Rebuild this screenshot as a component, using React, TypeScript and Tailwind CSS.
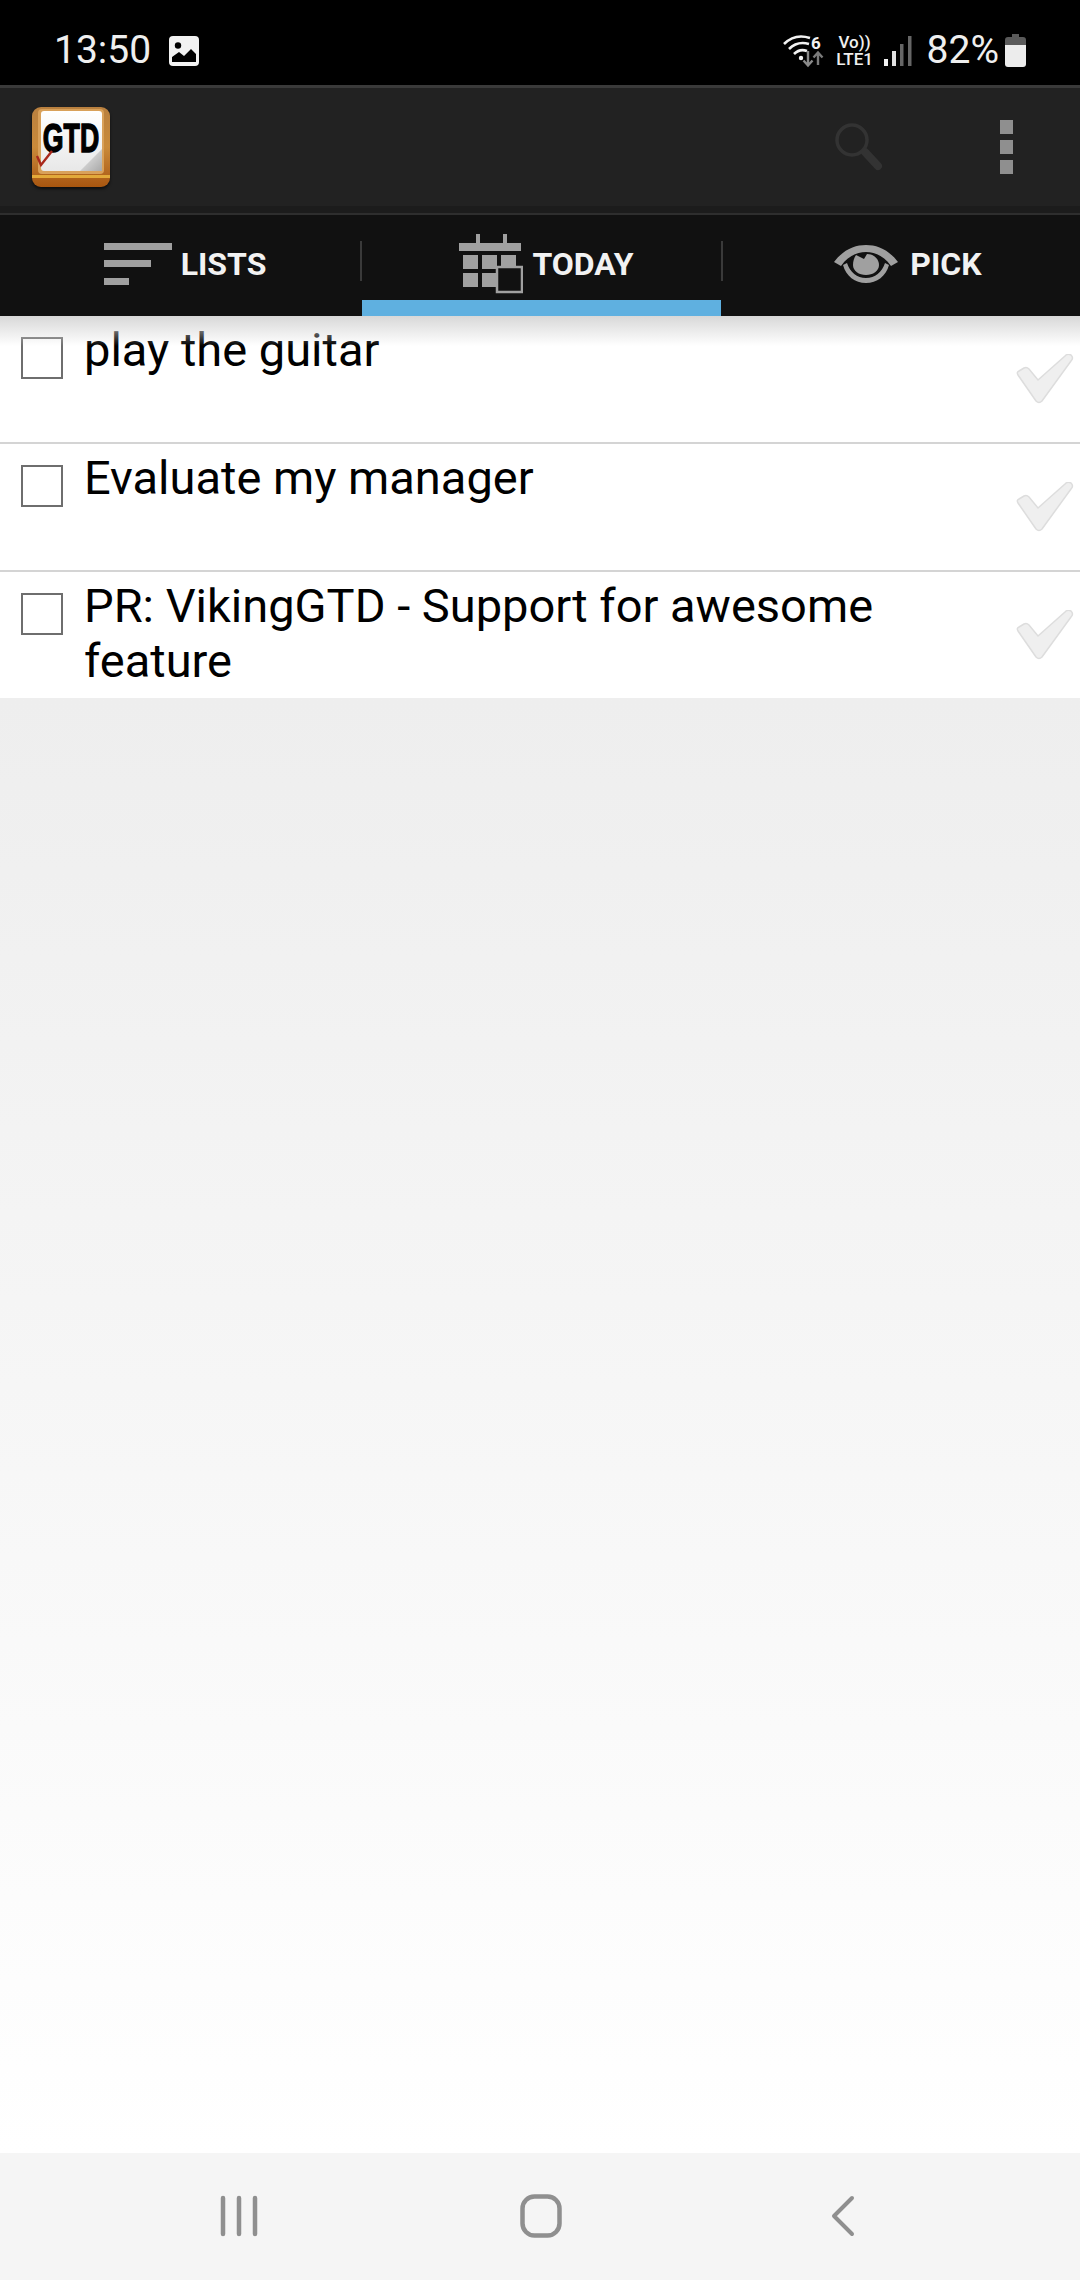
import React from 'react';

const items = [
  'play the guitar',
  'Evaluate my manager',
  'PR: VikingGTD - Support for awesome feature',
];

function ImageIcon() {
  return (
    <svg width="30" height="30" viewBox="0 0 30 30" className="ml-[18px]">
      <rect width="30" height="30" rx="4" fill="#f2f2f2" />
      <circle cx="9" cy="9.5" r="3.2" fill="#000" />
      <path d="M3 26 V21 L10 16 L15 20 L22 13 L27 18 V26 Z" fill="#000" />
    </svg>
  );
}

function WifiIcon() {
  return (
    <svg width="42" height="32" viewBox="0 0 42 32" fill="none" className="mr-[9px] overflow-visible">
      <path d="M1 9 C9 1 18 0 27 3" stroke="#f2f2f2" strokeWidth="2.6" />
      <path d="M6 14 C12 8 19 7 26 9" stroke="#f2f2f2" strokeWidth="2.6" />
      <path d="M11 19 C15 15 19 14 24 16" stroke="#f2f2f2" strokeWidth="2.6" />
      <circle cx="18" cy="23" r="2.2" fill="#f2f2f2" />
      <path d="M25 16 V30 M20.5 25.5 L25 30.5 L29.5 25.5" stroke="#8a8a8a" strokeWidth="2.4" />
      <path d="M35 30 V18 M30.5 22.5 L35 17.5 L39.5 22.5" stroke="#7a7a7a" strokeWidth="2.4" />
      <text x="28" y="14" fontSize="17" fontWeight="700" fill="#f2f2f2">6</text>
    </svg>
  );
}

function SignalIcon() {
  return (
    <svg width="28" height="30" viewBox="0 0 28 30" className="ml-[8px] mr-[15px]">
      <rect x="0" y="23" width="4" height="7" fill="#f2f2f2" />
      <rect x="8" y="15" width="4" height="15" fill="#e0e0e0" />
      <rect x="16" y="8" width="3.5" height="22" fill="#666" />
      <rect x="24" y="0" width="3.5" height="30" fill="#666" />
    </svg>
  );
}

function BatteryIcon() {
  return (
    <svg width="21" height="33" viewBox="0 0 21 33" className="ml-[6px]">
      <path d="M7 0 H14 V3 H18 Q21 3 21 6 V12 H0 V6 Q0 3 3 3 H7 Z" fill="#5a5a5a" />
      <path d="M0 11 H21 V30 Q21 33 18 33 H3 Q0 33 0 30 Z" fill="#ececec" />
    </svg>
  );
}

function SearchIcon() {
  return (
    <svg width="48" height="48" viewBox="0 0 48 48" fill="none" stroke="#333333">
      <circle cx="17" cy="17" r="15" strokeWidth="3.5" />
      <path d="M30 29 L43 43" strokeWidth="8" strokeLinecap="round" />
    </svg>
  );
}

function ListsIcon() {
  return (
    <svg width="68" height="42" viewBox="0 0 68 42" fill="#a0a0a0">
      <rect x="0" y="0" width="68" height="7" />
      <rect x="0" y="17" width="47" height="7" />
      <rect x="0" y="35" width="25" height="7" />
    </svg>
  );
}

function TodayIcon() {
  return (
    <svg width="64" height="60" viewBox="0 0 64 60" fill="#a0a0a0">
      <rect x="17" y="0" width="4" height="10" />
      <rect x="44" y="0" width="4" height="10" />
      <rect x="0" y="9" width="62" height="8" />
      <rect x="4" y="21" width="15" height="14" />
      <rect x="23" y="21" width="15" height="14" />
      <rect x="42" y="21" width="15" height="14" />
      <rect x="4" y="39" width="15" height="14" />
      <rect x="23" y="39" width="15" height="14" />
      <rect x="38" y="33" width="25" height="25" fill="#111111" stroke="#a0a0a0" strokeWidth="2.5" />
    </svg>
  );
}

function EyeIcon() {
  return (
    <svg width="64" height="38" viewBox="0 0 64 38" fill="#a0a0a0">
      <path d="M0 17 C10 4 21 0 32 0 C43 0 54 4 64 17 L57 21 C50 11 41 7 32 7 C23 7 14 11 7 21 Z" />
      <path d="M9 20 C12 31 21 38 32 38 C43 38 52 31 55 20 L51 18 C48 27 41 33 32 33 C23 33 16 27 13 18 Z" />
      <path d="M22 10 L30 14 L33 9 C41 9 45 15 45 20 C45 26 39 30 32 30 C25 30 19 26 19 20 C19 16 20 13 22 10 Z" />
    </svg>
  );
}

function CheckMark() {
  return (
    <svg width="58" height="50" viewBox="0 0 58 50" fill="#efefef" stroke="#dddddd" strokeWidth="1.5">
      <path d="M2 21 C1 19 1 18 3 17 L8 14 C10 13 11 13 13 15 L22 26 L49 2 C51 0 53 0 55 1 C57 3 57 5 55 7 L26 47 C24 49 22 49 20 47 Z" />
    </svg>
  );
}

function Logo() {
  return (
    <div className="relative h-[80px] w-[78px] rounded-[9px] bg-gradient-to-b from-[#b9803f] via-[#c98a3a] to-[#a8560f] shadow-[0_2px_3px_rgba(0,0,0,0.6)]">
      <div className="absolute inset-x-0 bottom-[9px] h-[3px] bg-[#e2a93a]" />
      <div className="absolute left-[6px] top-[2px] h-[65px] w-[66px] rounded-[4px] bg-[#d9a15a]" />
      <div className="absolute left-[9px] top-[4px] h-[60px] w-[61px] rounded-[3px] bg-gradient-to-b from-[#ffffff] to-[#e8e8e8]">
        <div className="absolute bottom-0 right-0 h-[22px] w-[22px] bg-gradient-to-br from-[#f4f4f4] to-[#a8a8a8] [clip-path:polygon(100%_0,100%_100%,0_100%)]" />
      </div>
      <div className="absolute left-[-29px] top-[11px] w-[136px] scale-x-[0.65] text-center text-[41px] leading-[41px] font-bold text-black [font-family:'Liberation_Sans',sans-serif] [-webkit-text-stroke:1.5px_black]">
        GTD
      </div>
      <svg width="20" height="20" viewBox="0 0 20 20" fill="none" className="absolute left-[3px] top-[41px]">
        <path d="M2 8 L6 17 L17 3" stroke="#a8281c" strokeWidth="2.4" />
      </svg>
    </div>
  );
}

export default function App() {
  return (
    <div className="flex h-[2280px] w-[1080px] flex-col overflow-hidden bg-white [font-family:Roboto,sans-serif]">
      {/* Status bar */}
      <div className="flex h-[85px] shrink-0 items-center bg-black pt-[16px] pl-[54px] pr-[54px] text-[#efefef]">
        <span className="text-[39px] leading-none">13:50</span>
        <ImageIcon />
        <div className="ml-auto flex items-center">
          <WifiIcon />
          <div className="flex w-[42px] flex-col items-center font-medium whitespace-nowrap">
            <span className="text-[17px] leading-[17px]">Vo))</span>
            <span className="text-[17px] leading-[17px]">LTE1</span>
          </div>
          <SignalIcon />
          <span className="text-[39px] leading-none">82%</span>
          <BatteryIcon />
        </div>
      </div>

      {/* Action bar */}
      <div className="flex h-[128px] shrink-0 items-center border-t-[3px] border-b-[7px] border-t-[#3a3a3a] border-b-[#1c1c1c] bg-[#222222] pl-[32px] pr-[67px]">
        <Logo />
        <div className="ml-auto mr-[117px]">
          <SearchIcon />
        </div>
        <div className="flex flex-col gap-[6px]">
          <div className="h-[14px] w-[13px] bg-[#8f8f8f]" />
          <div className="h-[14px] w-[13px] bg-[#8f8f8f]" />
          <div className="h-[14px] w-[13px] bg-[#8f8f8f]" />
        </div>
      </div>

      {/* Tabs */}
      <div className="flex h-[103px] shrink-0 border-t-[2px] border-t-[#2e2e2e] bg-[#111111] text-[32px] font-bold text-[#f2f2f2]">
        <div className="flex w-[362px] items-center">
          <div className="flex flex-1 items-center justify-center gap-[9px] pb-[3px] pl-[10px]">
            <ListsIcon />
            <span>LISTS</span>
          </div>
          <div className="mb-[10px] h-[40px] w-[2px] bg-[#3a3a3a]" />
        </div>
        <div className="flex h-full w-[359px] flex-col border-b-[16px] border-b-[#5fb0e0]">
          <div className="flex flex-1 items-center justify-center gap-[9px] pt-[13px] pl-[10px]">
            <TodayIcon />
            <span>TODAY</span>
          </div>
        </div>
        <div className="flex flex-1 items-center">
          <div className="mb-[10px] h-[40px] w-[2px] bg-[#3a3a3a]" />
          <div className="flex flex-1 items-center justify-center gap-[12px] pb-[3px] pl-[13px]">
            <EyeIcon />
            <span>PICK</span>
          </div>
        </div>
      </div>

      {/* Task list */}
      <div className="relative shrink-0 bg-white">
        {items.map((item, i) => (
          <div
            key={item}
            className={`flex items-start pl-[21px] ${i < items.length - 1 ? 'h-[128px] border-b-[2px] border-b-[#d4d4d4]' : 'h-[126px]'}`}
          >
            <div className="mt-[21px] h-[42px] w-[42px] shrink-0 border-[2px] border-[#6e6e6e]" />
            <div className="ml-[21px] w-[890px] pt-[6px] text-[47px] leading-[55px] text-black">{item}</div>
            <div className="ml-auto mt-[38px] mr-[6px] shrink-0">
              <CheckMark />
            </div>
          </div>
        ))}
        <div className="absolute inset-x-0 top-0 h-[30px] bg-gradient-to-b from-[#d8d8d8] to-transparent" />
      </div>

      {/* Empty area */}
      <div className="flex-1 bg-gradient-to-b from-[#eeeeee] to-[#ffffff]" />

      {/* Navigation bar */}
      <div className="flex h-[127px] shrink-0 items-center bg-[#f5f5f5] pl-[220px] pb-[1px]">
        <svg width="38" height="42" viewBox="0 0 38 42" stroke="#8f8f8f" strokeWidth="4.5" strokeLinecap="round">
          <path d="M3 3 V39 M19 3 V39 M35 3 V39" />
        </svg>
        <svg width="42" height="44" viewBox="0 0 42 44" fill="none" stroke="#8f8f8f" strokeWidth="4.5" className="ml-[262px]">
          <rect x="2.5" y="2.5" width="37" height="39" rx="12" />
        </svg>
        <svg width="24" height="42" viewBox="0 0 24 42" fill="none" stroke="#8f8f8f" strokeWidth="4" strokeLinecap="round" strokeLinejoin="round" className="ml-[269px]">
          <path d="M21 3 L3 21 L21 39" />
        </svg>
      </div>
    </div>
  );
}
